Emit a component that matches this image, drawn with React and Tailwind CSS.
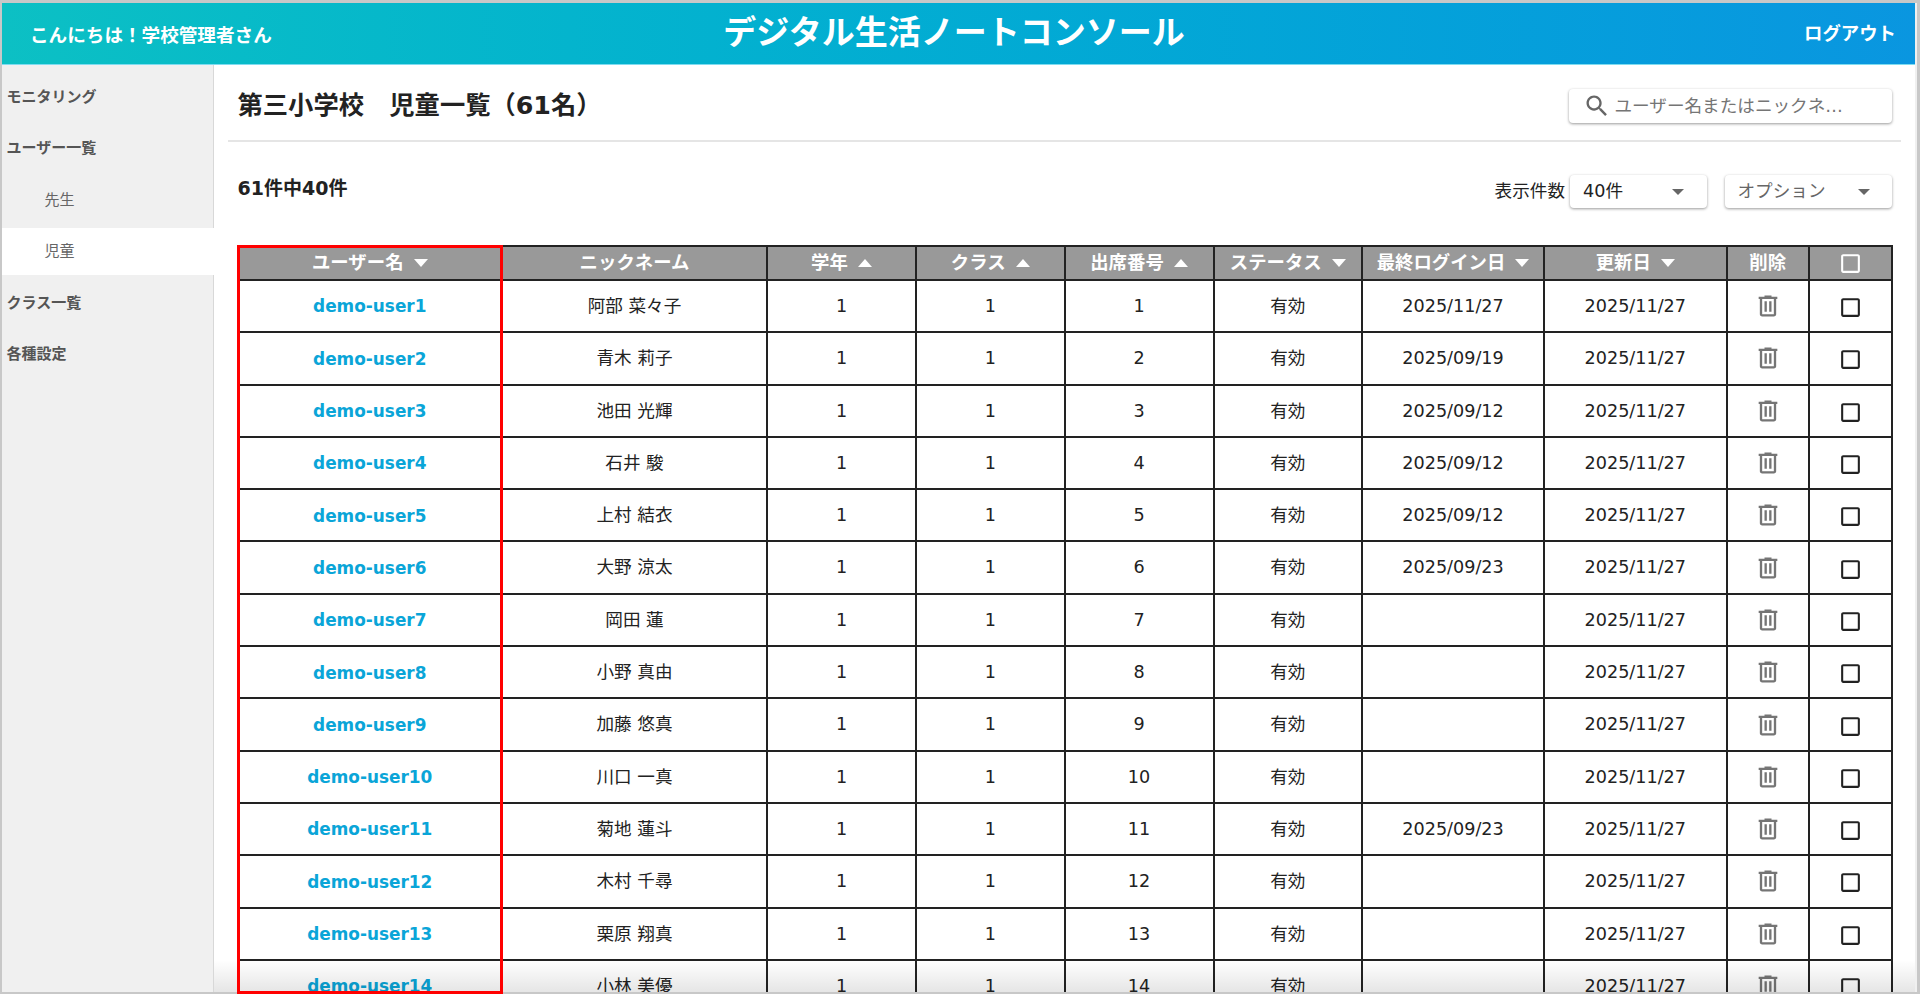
const FONT = "font-['DejaVu_Sans','Noto_Sans_CJK_JP',sans-serif]"

const columns = [
  { label: 'ユーザー名', sort: 'down', width: 'w-[264.5px]' },
  { label: 'ニックネーム', width: 'w-[265px]' },
  { label: '学年', sort: 'up', width: 'w-[149px]' },
  { label: 'クラス', sort: 'up', width: 'w-[148.5px]' },
  { label: '出席番号', sort: 'up', width: 'w-[149px]' },
  { label: 'ステータス', sort: 'down', width: 'w-[148.5px]' },
  { label: '最終ログイン日', sort: 'down', width: 'w-[182px]' },
  { label: '更新日', sort: 'down', width: 'w-[182.5px]' },
  { label: '削除', width: 'w-[82.5px]' },
  { label: '', check: true, width: 'w-[83px]' },
]

const students = [
  ['阿部 菜々子', '2025/11/27'],
  ['青木 莉子', '2025/09/19'],
  ['池田 光輝', '2025/09/12'],
  ['石井 駿', '2025/09/12'],
  ['上村 結衣', '2025/09/12'],
  ['大野 涼太', '2025/09/23'],
  ['岡田 蓮', ''],
  ['小野 真由', ''],
  ['加藤 悠真', ''],
  ['川口 一真', ''],
  ['菊地 蓮斗', '2025/09/23'],
  ['木村 千尋', ''],
  ['栗原 翔真', ''],
  ['小林 美優', ''],
]

const CheckIcon = ({ className }) => (
  <svg viewBox="0 0 24 24" className={`w-[25px] h-[25px] fill-current ${className}`}>
    <path d="M19 5v14H5V5h14m0-2H5c-1.1 0-2 .9-2 2v14c0 1.1.9 2 2 2h14c1.1 0 2-.9 2-2V5c0-1.1-.9-2-2-2z" />
  </svg>
)

const TrashIcon = () => (
  <svg viewBox="0 0 24 24" className="w-7 h-7 fill-[#757575]">
    <path d="M7 21q-.825 0-1.412-.587Q5 19.825 5 19V6H4V4h5V3h6v1h5v2h-1v13q0 .825-.587 1.413Q17.825 21 17 21ZM17 6H7v13h10ZM9 17h2V8H9Zm4 0h2V8h-2Z" />
  </svg>
)

const SearchIcon = () => (
  <svg viewBox="0 0 24 24" className="w-7 h-7 shrink-0 fill-[#666]">
    <path d="M15.5 14h-.79l-.28-.27C15.41 12.59 16 11.11 16 9.5 16 5.91 13.09 3 9.5 3S3 5.91 3 9.5 5.91 16 9.5 16c1.61 0 3.09-.59 4.23-1.57l.27.28v.79l5 4.99L20.49 19l-4.99-5zm-6 0C7.01 14 5 11.99 5 9.5S7.01 5 9.5 5 14 7.01 14 9.5 11.99 14 9.5 14z" />
  </svg>
)

const Caret = ({ up }) => (
  <span
    className={`inline-block w-0 h-0 border-x-[7px] border-x-transparent ${
      up ? 'border-b-[8px] border-b-white' : 'border-t-[8px] border-t-white'
    }`}
  />
)

const SelectBox = ({ text, className, textClass }) => (
  <div
    className={`h-[33px] bg-white rounded shadow-[0_1px_3px_rgba(0,0,0,0.4)] flex items-center justify-between ${className}`}
  >
    <span className={`text-[17.6px] ${textClass}`}>{text}</span>
    <span className="w-0 h-0 border-x-[6px] border-x-transparent border-t-[6px] border-t-[#666]" />
  </div>
)

const SideItem = ({ children, sub, active }) => (
  <div
    className={`flex items-center text-[15px] ${
      sub ? 'pl-[42.5px] text-[#666]' : 'pl-[4.5px] font-bold text-[#555]'
    } ${active ? 'h-[47px] my-[2.25px] bg-white -mr-px' : 'h-[51.5px]'}`}
  >
    {children}
  </div>
)

export default function App() {
  return (
    <div className={`h-[994px] overflow-hidden bg-[#c8c8c8] pt-[3px] pb-[2px] pl-[2px] pr-[3px] flex flex-col text-[#222] ${FONT}`}>
      <div className="flex-1 min-h-0 flex flex-col bg-[#f0f0f0] pr-[2px]">
        <header className="h-[62px] shrink-0 bg-gradient-to-r from-[#0cc0c4] to-[#0a96e0] border-b border-b-[#7fdcf0] text-white font-bold flex items-center">
          <div className="flex-1 pl-[28px] pt-[4px] text-[18.6px]">こんにちは！学校管理者さん</div>
          <div className="text-[33px] pb-[2px] pr-[18px]">デジタル生活ノートコンソール</div>
          <div className="flex-1 text-right pr-[19px] text-[18.4px]">ログアウト</div>
        </header>

        <div className="flex-1 flex min-h-0">
          <nav className="w-[212px] shrink-0 bg-[#f0f0f0] border-r border-r-[#d8d8d8] pt-[6px]">
            <SideItem>モニタリング</SideItem>
            <SideItem>ユーザー一覧</SideItem>
            <SideItem sub>先生</SideItem>
            <SideItem sub active>児童</SideItem>
            <SideItem>クラス一覧</SideItem>
            <SideItem>各種設定</SideItem>
          </nav>

          <main className="flex-1 min-w-0 bg-white pl-[14px] pr-[14px] overflow-hidden relative">
            <div className="h-[77px] pt-[4px] border-b-2 border-b-[#e5e5e5] flex items-center justify-between pl-[9.5px] pr-[9px]">
              <h1 className="text-[25.3px] font-bold leading-none mt-[3px]">第三小学校　児童一覧（61名）</h1>
              <div className="w-[323px] h-[34px] mt-[3px] bg-white rounded shadow-[0_1px_3px_rgba(0,0,0,0.4)] flex items-center pl-[13.5px] gap-[4px] text-[17.6px] text-[#757575]">
                <SearchIcon />
                <span>ユーザー名またはニックネ…</span>
              </div>
            </div>

            <div className="h-[103px] flex items-start justify-between pl-[9.5px] pr-[9px] pt-[33px]">
              <div className="text-[19px] font-bold leading-none pt-[4px]">61件中40件</div>
              <div className="flex items-center">
                <span className="text-[17.6px] mr-[5px]">表示件数</span>
                <SelectBox text="40件" className="w-[136.5px] pl-[13px] pr-[23px] mr-[18px]" />
                <SelectBox text="オプション" className="w-[167.5px] pl-[13px] pr-[22px]" textClass="text-[#666]" />
              </div>
            </div>

            <table className="ml-[8.5px] w-[1654px] table-fixed border-collapse text-[17.6px] text-center">
              <colgroup>
                {columns.map((c, i) => (
                  <col key={i} className={c.width} />
                ))}
              </colgroup>
              <thead>
                <tr className="h-[34px] bg-[#999] text-white">
                  {columns.map((c, i) => (
                    <th key={i} className="border-2 border-[#222] p-0 font-bold text-[18.4px]">
                      <div className="flex items-center justify-center gap-[10px] leading-none">
                        {c.check ? <CheckIcon className="text-white" /> : c.label}
                        {c.sort && <Caret up={c.sort === 'up'} />}
                      </div>
                    </th>
                  ))}
                </tr>
              </thead>
              <tbody>
                {students.map(([name, login], i) => (
                  <tr key={name} className="h-[52.3px]">
                    <td className="border-2 border-[#222] p-0 pt-[2px] font-bold text-[16.9px] text-[#0aa5d8]">demo-user{i + 1}</td>
                    <td className="border-2 border-[#222] p-0">{name}</td>
                    <td className="border-2 border-[#222] p-0">1</td>
                    <td className="border-2 border-[#222] p-0">1</td>
                    <td className="border-2 border-[#222] p-0">{i + 1}</td>
                    <td className="border-2 border-[#222] p-0">有効</td>
                    <td className="border-2 border-[#222] p-0">{login}</td>
                    <td className="border-2 border-[#222] p-0">2025/11/27</td>
                    <td className="border-2 border-[#222] p-0">
                      <div className="flex justify-center"><TrashIcon /></div>
                    </td>
                    <td className="border-2 border-[#222] p-0">
                      <div className="flex justify-center pt-[3px]"><CheckIcon className="text-[#222]" /></div>
                    </td>
                  </tr>
                ))}
              </tbody>
            </table>

            {/* fade at the bottom edge of the capture */}
            <div className="absolute left-0 right-0 bottom-0 h-[32px] bg-gradient-to-b from-transparent to-black/10 pointer-events-none" />
          </main>
        </div>
      </div>

      {/* red highlight over the user name column */}
      <div className="absolute left-[237px] top-[245px] w-[265.5px] h-[749px] border-[3px] border-[#f00] pointer-events-none" />
    </div>
  )
}
